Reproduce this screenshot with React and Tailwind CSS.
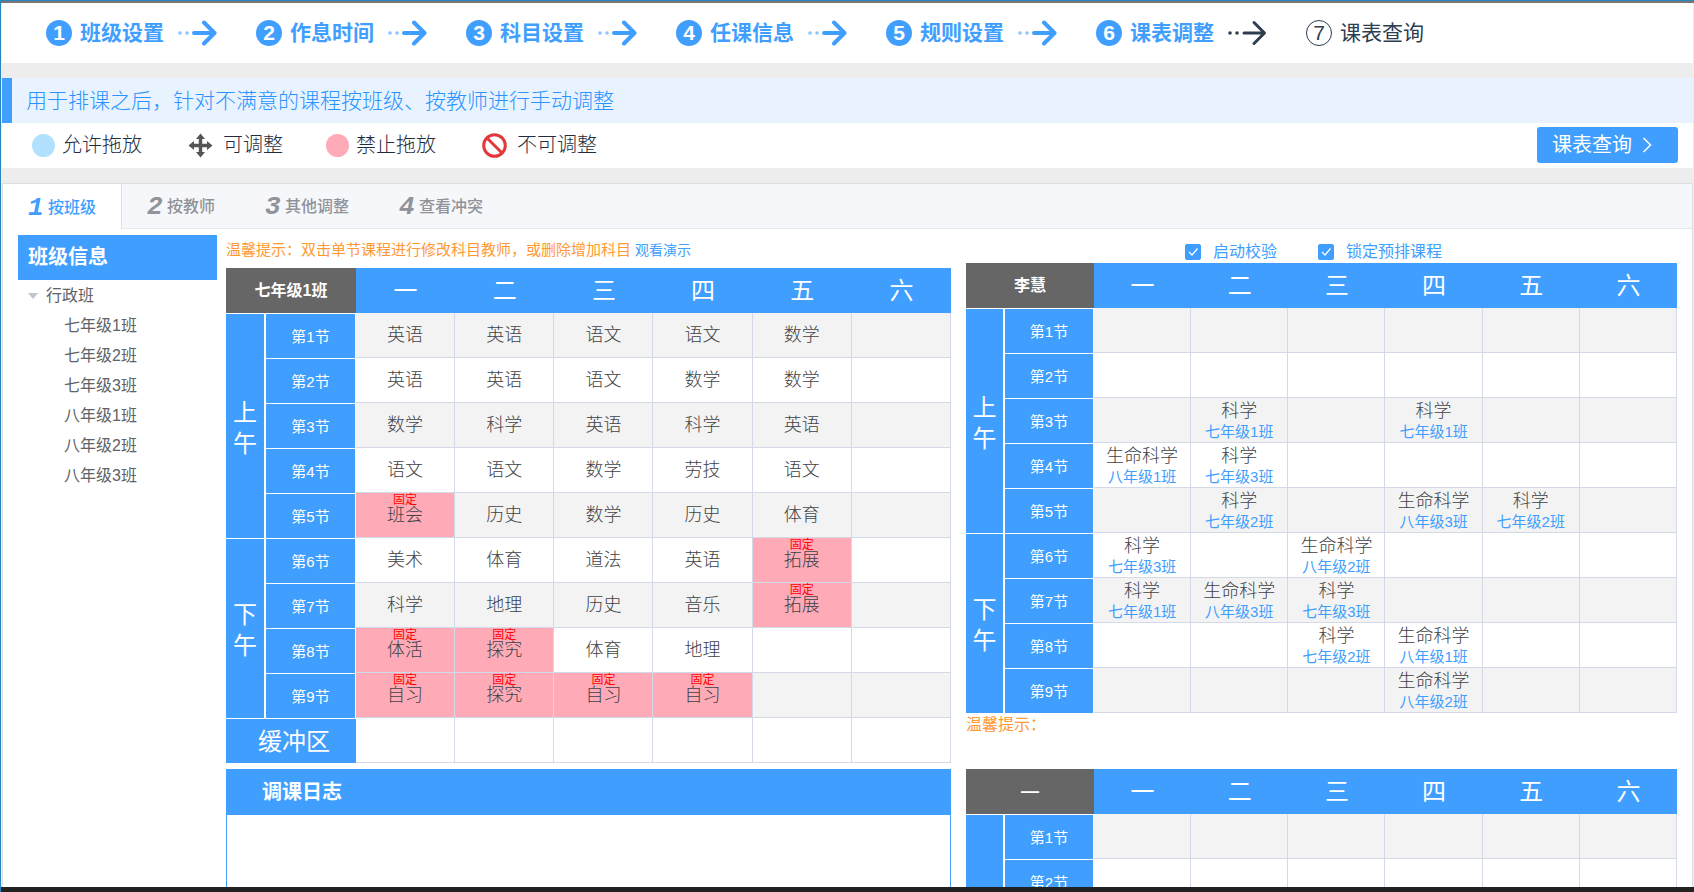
import { useState } from "react"

const steps = ["班级设置", "作息时间", "科目设置", "任课信息", "规则设置", "课表调整", "课表查询"]

const tabs = ["按班级", "按教师", "其他调整", "查看冲突"]

const classes = ["七年级1班", "七年级2班", "七年级3班", "八年级1班", "八年级2班", "八年级3班"]

const days = ["一", "二", "三", "四", "五", "六"]

// "!" marks a lesson that is fixed
const classLessons = [
    ["英语", "英语", "语文", "语文", "数学", ""],
    ["英语", "英语", "语文", "数学", "数学", ""],
    ["数学", "科学", "英语", "科学", "英语", ""],
    ["语文", "语文", "数学", "劳技", "语文", ""],
    ["!班会", "历史", "数学", "历史", "体育", ""],
    ["美术", "体育", "道法", "英语", "!拓展", ""],
    ["科学", "地理", "历史", "音乐", "!拓展", ""],
    ["!体活", "!探究", "体育", "地理", "", ""],
    ["!自习", "!探究", "!自习", "!自习", "", ""]
]

// subject and class, split by "/"
const teacherLessons = [
    ["", "", "", "", "", ""],
    ["", "", "", "", "", ""],
    ["", "科学/七年级1班", "", "科学/七年级1班", "", ""],
    ["生命科学/八年级1班", "科学/七年级3班", "", "", "", ""],
    ["", "科学/七年级2班", "", "生命科学/八年级3班", "科学/七年级2班", ""],
    ["科学/七年级3班", "", "生命科学/八年级2班", "", "", ""],
    ["科学/七年级1班", "生命科学/八年级3班", "科学/七年级3班", "", "", ""],
    ["", "", "科学/七年级2班", "生命科学/八年级1班", "", ""],
    ["", "", "", "生命科学/八年级2班", "", ""]
]

const emptyLessons = [
    ["", "", "", "", "", ""],
    ["", "", "", "", "", ""]
]

function StepArrow({ dark }) {
    return (
        <svg
            className={dark ? "text-[#2c3e50]" : "text-[#409eff]"}
            width="40"
            height="26"
            viewBox="0 0 40 26"
            fill="none"
            stroke="currentColor"
            strokeWidth={dark ? 3 : 4}
            strokeLinecap="round"
            strokeLinejoin="round"
        >
            <circle cx="3" cy="13" r="1.800" fill="currentColor" stroke="none" opacity={dark ? 1 : 0.6} />
            <circle cx="10" cy="13" r="1.800" fill="currentColor" stroke="none" opacity={dark ? 1 : 0.6} />
            <path d="M17 13H37M27 2.500L37.500 13L27 23.500" />
        </svg>
    )
}

function Steps() {
    return (
        <nav className="flex h-[60px] items-center bg-white pl-11">
            {steps.map((name, i) => {
                const last = i === steps.length - 1
                return (
                    <a
                        key={name}
                        href="#"
                        className={
                            "mr-[39px] flex items-center text-[21px] leading-[26px] " +
                            (last ? "text-[#2c3e50]" : "font-bold text-[#409eff]")
                        }
                    >
                        <span
                            className={
                                "mr-2 flex size-[26px] items-center justify-center rounded-full " +
                                (last ? "border border-[#2c3e50]" : "bg-[#409eff] text-white")
                            }
                        >
                            {i + 1}
                        </span>
                        <span className="mr-[13px]">{name}</span>
                        {!last && <StepArrow dark={i === 5} />}
                    </a>
                )
            })}
        </nav>
    )
}

function Legend() {
    return (
        <div className="flex h-[45px] items-center bg-white pb-px pl-[30px] pr-[15px] text-[20px] leading-6 font-light text-[#1f2d3d]">
            <span className="mr-[7px] size-[23px] rounded-full bg-[#b1e1ff]" />
            <span className="mr-[46px]">允许拖放</span>

            <svg className="mr-2.5" width="25" height="25" viewBox="0 0 25 25" fill="#555" aria-hidden="true">
                <path d="M12.500 0.500L17 6H14.200V10.800H19V8L24.500 12.500L19 17V14.200H14.200V19H17L12.500 24.500L8 19H10.800V14.200H6V17L0.500 12.500L6 8V10.800H10.800V6H8Z" />
            </svg>
            <span className="mr-[43px]">可调整</span>

            <span className="mr-[7px] size-[23px] rounded-full bg-[#ffabb7]" />
            <span className="mr-[46px]">禁止拖放</span>

            <svg className="mr-2.5" width="25" height="25" viewBox="0 0 25 25" fill="none" stroke="#e4393c" strokeWidth="3" aria-hidden="true">
                <circle cx="12.500" cy="12.500" r="10.800" />
                <path d="M5 5L20 20" />
            </svg>
            <span>不可调整</span>

            <button className="ml-auto flex h-9 w-[141px] items-center rounded-[3px] bg-[#409eff] pl-[15px] font-normal text-white">
                课表查询
                <svg className="ml-2.5" width="10" height="16" viewBox="0 0 10 16" fill="none" stroke="currentColor" strokeWidth="1.500" aria-hidden="true">
                    <path d="M1.500 1L8.500 8L1.500 15" />
                </svg>
            </button>
        </div>
    )
}

function Cell({ value }) {
    const fixed = value.startsWith("!")
    const [subject, room] = value.replace("!", "").split("/")

    return (
        <td
            className={
                "relative h-[45px] border-b border-r border-[#d3d9e6] p-0 text-center text-[18px] leading-[20px] font-light text-[#404246] " +
                (fixed ? "bg-[#ffabb7]" : "")
            }
        >
            {fixed && (
                <span className="absolute inset-x-0 top-0 text-[12px] leading-[14px] font-normal text-[#ff0000]">固定</span>
            )}
            {room ? (
                <div className="pt-[3px]">
                    {subject}
                    <div className="text-[15px] leading-[21px] font-normal text-[#409eff]">{room}</div>
                </div>
            ) : subject}
        </td>
    )
}

function Schedule({ title, lessons, buffer }) {
    return (
        <table className="w-full table-fixed border-separate border-spacing-0">
            <colgroup>
                <col className={buffer ? "w-10" : "w-[39px]"} />
                <col className={buffer ? "w-[90px]" : "w-[89px]"} />
                {days.map(d => <col key={d} />)}
            </colgroup>
            <thead>
                <tr>
                    <th colSpan={2} className="h-[45px] bg-[#666] p-0 text-[16px] leading-6 font-bold text-white">
                        {title}
                    </th>
                    {days.map(d => (
                        <th key={d} className="h-[45px] bg-[#409eff] p-0 text-[24px] leading-[30px] font-normal text-white">
                            {d}
                        </th>
                    ))}
                </tr>
            </thead>
            <tbody>
                {lessons.map((row, i) => (
                    <tr key={i} className={i % 2 === 0 ? "bg-[#f3f3f3]" : "bg-white"}>
                        {(i === 0 || i === 5) && (
                            <th
                                rowSpan={i === 0 ? Math.min(5, lessons.length) : lessons.length - 5}
                                className="border-t border-r-2 border-white bg-[#409eff] p-0 pt-[3px] text-[24px] leading-[31px] font-normal text-white"
                            >
                                {lessons.length > 5 && (
                                    <>
                                        {i === 0 ? "上" : "下"}
                                        <br />
                                        午
                                    </>
                                )}
                            </th>
                        )}
                        <th className="h-[45px] border-t border-r border-white bg-[#409eff] p-0 pt-0.5 text-[15px] leading-5 font-normal text-white">
                            第{i + 1}节
                        </th>
                        {row.map((value, n) => <Cell key={n} value={value} />)}
                    </tr>
                ))}
                {buffer && (
                    <tr>
                        <th colSpan={2} className="h-[45px] border-t border-white bg-[#409eff] p-0 pt-0.5 pl-1.5 text-[24px] leading-[30px] font-normal text-white">
                            缓冲区
                        </th>
                        {days.map(d => <Cell key={d} value="" />)}
                    </tr>
                )}
            </tbody>
        </table>
    )
}

function Check({ label }) {
    const [checked, setChecked] = useState(true)

    return (
        <label className="flex items-center gap-3 text-[16px] leading-5 text-[#409eff]">
            <span className="grid">
                <input
                    type="checkbox"
                    checked={checked}
                    onChange={e => setChecked(e.target.checked)}
                    className="col-start-1 row-start-1 size-4 appearance-none rounded-[2px] border border-[#409eff] bg-white checked:bg-[#409eff]"
                />
                {checked && (
                    <svg className="pointer-events-none col-start-1 row-start-1" width="16" height="16" viewBox="0 0 16 16" fill="none" stroke="#fff" strokeWidth="1.200">
                        <path d="M4 8L7 11L12.500 4.500" />
                    </svg>
                )}
            </span>
            {label}
        </label>
    )
}

function Sidebar() {
    return (
        <aside className="w-[199px] shrink-0 pt-1.5 text-[16px] text-[#606266]">
            <h2 className="h-[45px] bg-[#409eff] pl-2.5 text-[20px] leading-[45px] font-bold text-white">班级信息</h2>
            <div className="mt-px flex h-[30px] items-center pl-2.5">
                <svg className="mr-2" width="10" height="6" viewBox="0 0 10 6" fill="#c0c4cc" aria-hidden="true">
                    <path d="M0 0H10L5 6Z" />
                </svg>
                行政班
            </div>
            <ul>
                {classes.map(name => (
                    <li key={name} className="h-[30px] pl-[46px] leading-[30px]">{name}</li>
                ))}
            </ul>
        </aside>
    )
}

function App() {

    const [active, setActive] = useState(0)

    return (

        <div className="flex h-screen flex-col overflow-hidden border-t border-l border-[#2b84bd] bg-[#ededed] px-px font-['Liberation_Sans','Noto_Sans_CJK_SC',sans-serif]">

            <div className="-mx-px h-0.5 shrink-0 bg-[#777]" />

            <div className="flex min-h-0 flex-1 flex-col overflow-hidden">

                <header className="shrink-0">
                    <Steps />
                    <p className="mt-[15px] h-[45px] border-l-10 border-[#409eff] bg-[#e8f3ff] pl-3.5 text-[21px] leading-[45px] font-light text-[#2b93ff]">
                        用于排课之后，针对不满意的课程按班级、按教师进行手动调整
                    </p>
                    <Legend />
                </header>

                <main className="mt-[15px] min-h-0 flex-1 border-x border-t border-[#dcdfe6] bg-white shadow-md">

                    <div role="tablist" className="flex h-[45px] bg-[#f5f7fa]">
                        {tabs.map((name, i) => (
                            <button
                                key={name}
                                role="tab"
                                aria-selected={active === i}
                                onClick={() => setActive(i)}
                                className={
                                    "flex items-center px-[25px] pt-0.5 text-[16px] font-medium " +
                                    (active === i
                                        ? "border-r border-[#dcdfe6] bg-white text-[#409eff]"
                                        : "border-b border-[#e4e7ed] text-[#909399]")
                                }
                            >
                                <span className="w-5 text-left font-['Liberation_Mono',monospace] text-[26px] leading-8 font-bold italic">
                                    {i + 1}
                                </span>
                                {name}
                            </button>
                        ))}
                        <div className="flex-1 border-b border-[#e4e7ed]" />
                    </div>

                    <div className="flex pl-[15px] pr-[15px]">

                        <Sidebar />

                        <div className="ml-[9px] grid flex-1 grid-cols-[725fr_711fr] gap-x-[15px]">

                            <section>
                                <p className="h-[39px] text-[15px] leading-[42px] text-[#ff9933]">
                                    温馨提示：双击单节课程进行修改科目教师，或删除增加科目
                                    <a href="#" className="ml-1 text-[14px] text-[#409eff]">观看演示</a>
                                </p>
                                <Schedule title="七年级1班" lessons={classLessons} buffer />
                                <div className="mt-1.5 h-[200px] border border-[#409eff]">
                                    <h2 className="h-[45px] bg-[#409eff] pl-[35px] text-[20px] leading-[44px] font-bold text-white">
                                        调课日志
                                    </h2>
                                </div>
                            </section>

                            <section>
                                <div className="flex h-[34px] items-end gap-[41px] pb-px pl-[219px]">
                                    <Check label="启动校验" />
                                    <Check label="锁定预排课程" />
                                </div>
                                <Schedule title="李慧" lessons={teacherLessons} />
                                <p className="h-14 text-[16px] leading-6 text-[#ff9933]">温馨提示：</p>
                                <Schedule
                                    title={<span className="text-[18px]">—</span>}
                                    lessons={emptyLessons}
                                />
                            </section>

                        </div>

                    </div>

                </main>

            </div>

            <div className="-mx-px h-[5px] shrink-0 bg-[#222]" />

        </div>
    )
}

export default App
